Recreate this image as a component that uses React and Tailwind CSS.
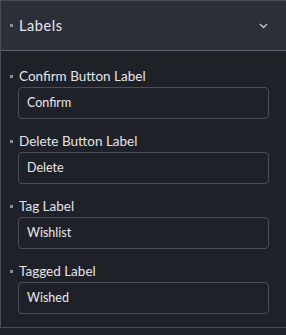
import React from "react";

const fields = [
  { label: "Confirm Button Label", value: "Confirm" },
  { label: "Delete Button Label", value: "Delete" },
  { label: "Tag Label", value: "Wishlist" },
  { label: "Tagged Label", value: "Wished" },
];

export default function App() {
  return (
    <div
      className="w-[286px] h-[335px] bg-[#1f2129] text-[#e4e4e7]"
      style={{ fontFamily: "Lato, 'Noto Sans', sans-serif" }}
    >
      <div className="border-l border-t border-b border-[#4a4c56]">
        <div className="h-[50px] bg-[#2d2f38] border-b border-[#5f626c] flex items-center pl-[9px] pr-[18px]">
          <span className="w-[3px] h-[3px] bg-[#8b8d95] mr-[6px]" />
          <span className="text-[14.5px] tracking-[0.6px] text-[#e8e8ea]">Labels</span>
          <svg className="ml-auto" width="9" height="6" viewBox="0 0 9 6" fill="none">
            <path d="M1 1l3.5 3.5L8 1" stroke="#c4c5ca" strokeWidth="1.4" />
          </svg>
        </div>
        <div className="pt-[15px] pb-[13px] flex flex-col gap-3">
          {fields.map((f) => (
            <div key={f.label} className="flex flex-col">
              <div className="flex items-center h-5 pl-[9px]">
                <span className="w-[3px] h-[3px] bg-[#8b8d95] mr-[6px]" />
                <span className="text-[13.5px] leading-5 text-[#e4e4e7]">{f.label}</span>
              </div>
              <div className="ml-[17px] mt-[1px] w-[251px] h-[32px] border border-[#4b4e58] rounded-[4px] flex items-center pl-2 text-[12.5px] text-[#e8e8ea]">
                {f.value}
              </div>
            </div>
          ))}
        </div>
      </div>
    </div>
  );
}
